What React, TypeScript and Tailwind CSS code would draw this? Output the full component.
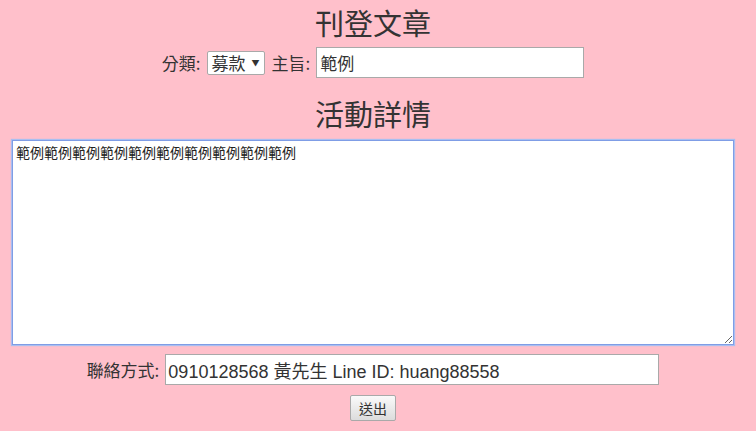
import React from "react";

const cjk = "font-['Noto_Sans_CJK_TC','Liberation_Sans',sans-serif]";

export default function App() {
	return (
		<div className={`w-[756px] h-[431px] bg-[#ffc0cb] text-[#333] ${cjk} overflow-hidden`}>
			<div className="w-[746px] flex flex-col items-center">
				<h1 className="text-[29px] leading-[44px] font-normal">刊登文章</h1>

				<div className="flex items-center gap-[6px] mt-[3px] text-[17px]">
					<span>分類:</span>
					<div className="flex items-center gap-[6px] h-[24px] px-[4px] bg-white border border-[#a9a9a9] rounded-[2px]">
						<span className="text-[17px] leading-none">募款</span>
						<span className="text-[8px] leading-none">▼</span>
					</div>
					<span className="ml-[1px]">主旨:</span>
					<input
						readOnly
						defaultValue="範例"
						className={`w-[268px] h-[31px] px-[3px] bg-white border border-[#a9a9a9] text-[17px] text-[#333] outline-none ${cjk}`}
					/>
				</div>

				<h2 className="text-[29px] leading-[40px] font-normal mt-[15px]">活動詳情</h2>

				<textarea
					readOnly
					defaultValue="範例範例範例範例範例範例範例範例範例範例"
					className={`mt-[7px] w-[722px] h-[205px] py-[2px] px-[3px] bg-white border border-[#7f9de6] shadow-[0_0_1px_1px_#a9bff0] text-[14px] leading-[18px] text-[#222] outline-none ${cjk}`}
				/>

				<div className="flex items-center gap-[6px] mt-[9px] text-[17px]">
					<span>聯絡方式:</span>
					<input
						readOnly
						defaultValue="0910128568 黃先生 Line ID: huang88558"
						className="w-[494px] h-[31px] px-[2px] bg-white border border-[#a9a9a9] text-[18px] text-[#333] outline-none font-['Liberation_Sans','Noto_Sans_CJK_TC',sans-serif]"
					/>
				</div>

				<button
					type="button"
					className="mt-[10px] w-[46px] h-[26px] text-[14px] text-[#333] border border-[#a9a9a9] rounded-[2px] bg-gradient-to-b from-[#fafafa] to-[#dcdcdc]"
				>
					送出
				</button>
			</div>
		</div>
	);
}
